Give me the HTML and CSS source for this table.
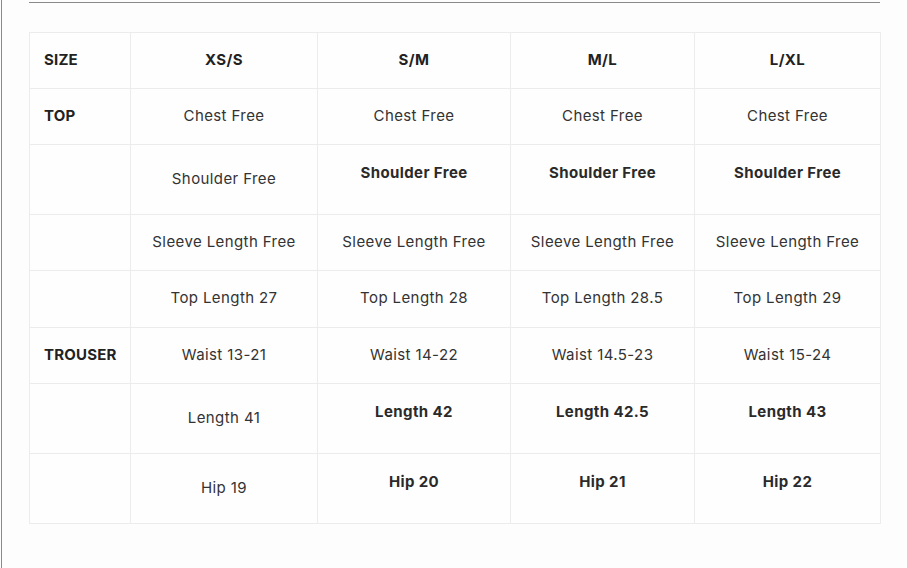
FILE: index.html
```html
<!DOCTYPE html>
<html>
<head>
<meta charset="utf-8">
<link rel="stylesheet" href="styles.css">
</head>
<body>
<div class="page">
  <div class="rule"></div>
  <table class="size-table">
    <colgroup>
      <col class="c0"><col class="c1"><col class="c2"><col class="c3"><col class="c4">
    </colgroup>
    <tr>
      <td class="label">SIZE</td>
      <td class="head">XS/S</td>
      <td class="head">S/M</td>
      <td class="head">M/L</td>
      <td class="head">L/XL</td>
    </tr>
    <tr>
      <td class="label">TOP</td>
      <td>Chest Free</td>
      <td>Chest Free</td>
      <td>Chest Free</td>
      <td>Chest Free</td>
    </tr>
    <tr>
      <td class="label"></td>
      <td>Shoulder Free</td>
      <td><p class="strong">Shoulder Free</p></td>
      <td><p class="strong">Shoulder Free</p></td>
      <td><p class="strong">Shoulder Free</p></td>
    </tr>
    <tr>
      <td class="label"></td>
      <td>Sleeve Length Free</td>
      <td>Sleeve Length Free</td>
      <td>Sleeve Length Free</td>
      <td>Sleeve Length Free</td>
    </tr>
    <tr class="tall">
      <td class="label"></td>
      <td>Top Length 27</td>
      <td>Top Length 28</td>
      <td>Top Length 28.5</td>
      <td>Top Length 29</td>
    </tr>
    <tr>
      <td class="label">TROUSER</td>
      <td>Waist 13-21</td>
      <td>Waist 14-22</td>
      <td>Waist 14.5-23</td>
      <td>Waist 15-24</td>
    </tr>
    <tr>
      <td class="label"></td>
      <td>Length 41</td>
      <td><p class="strong">Length 42</p></td>
      <td><p class="strong">Length 42.5</p></td>
      <td><p class="strong">Length 43</p></td>
    </tr>
    <tr>
      <td class="label"></td>
      <td>Hip 19</td>
      <td><p class="strong">Hip 20</p></td>
      <td><p class="strong">Hip 21</p></td>
      <td><p class="strong">Hip 22</p></td>
    </tr>
  </table>
</div>
</body>
</html>
```
FILE: styles.css
```css
html, body {
  margin: 0;
  padding: 0;
  background: #fdfdfd;
}
body {
  font-family: "Inter", "Open Sans", sans-serif;
  color: #333;
  font-size: 15px;
  letter-spacing: 0.4px;
}
.page {
  margin-left: 1px;
  border-left: 1px solid #8a8a8a;
  height: 568px;
  box-sizing: border-box;
  padding: 2px 27px 0 27px;
  overflow: hidden;
}
.rule {
  height: 1px;
  background: #8a8a8a;
  margin-bottom: 29px;
}
.size-table {
  width: 851px;
  border-collapse: collapse;
  table-layout: fixed;
  background: #fefefe;
}
.c0 { width: 101px; }
.c1 { width: 187px; }
.c2 { width: 193px; }
.c3 { width: 184px; }
.c4 { width: 186px; }
.size-table td {
  border: 1px solid #ececec;
  text-align: center;
  vertical-align: middle;
  padding: 16px 8px 18px 8px;
  line-height: 21px;
  height: 21px;
}
.size-table tr.tall td {
  padding-bottom: 19px;
}
.size-table td.label {
  text-align: left;
  padding-left: 14px;
  font-weight: 700;
  color: #222;
  letter-spacing: 0.2px;
}
.size-table td.head {
  font-weight: 700;
  color: #222;
}
.strong {
  margin: 1px 0 13px 0;
  font-weight: 700;
  color: #2a2a2a;
}
```
